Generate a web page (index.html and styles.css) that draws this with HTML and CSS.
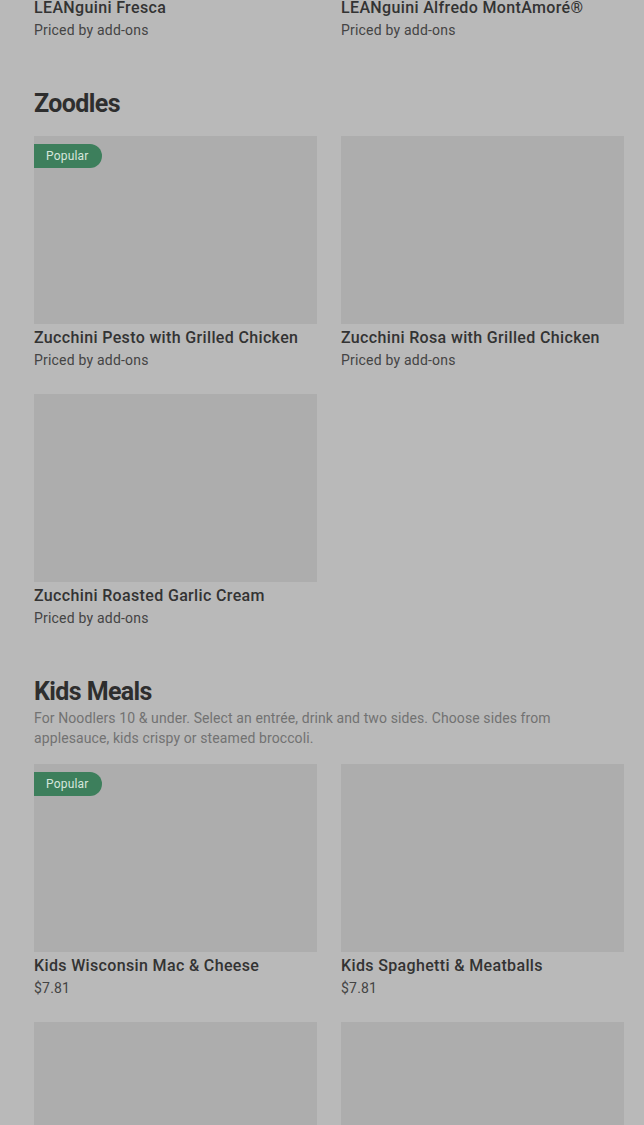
FILE: index.html
```html
<!DOCTYPE html>
<html lang="en">
<head>
    <meta charset="UTF-8">
    <meta name="viewport" content="width=device-width, initial-scale=1.0">
    <title>Menu</title>
    <link rel="stylesheet" href="styles.css">
</head>
<body>
    <div class="menu">
        <!-- tail of the previous section, scrolled past -->
        <section class="section section-tail">
            <div class="grid">
                <div class="item">
                    <div class="item-name">LEANguini Fresca</div>
                    <div class="item-price">Priced by add-ons</div>
                </div>
                <div class="item">
                    <div class="item-name">LEANguini Alfredo MontAmoré®</div>
                    <div class="item-price">Priced by add-ons</div>
                </div>
            </div>
        </section>

        <section class="section">
            <h2 class="section-title">Zoodles</h2>
            <div class="grid">
                <div class="item">
                    <div class="item-photo"><span class="badge">Popular</span></div>
                    <div class="item-name">Zucchini Pesto with Grilled Chicken</div>
                    <div class="item-price">Priced by add-ons</div>
                </div>
                <div class="item">
                    <div class="item-photo"></div>
                    <div class="item-name">Zucchini Rosa with Grilled Chicken</div>
                    <div class="item-price">Priced by add-ons</div>
                </div>
                <div class="item">
                    <div class="item-photo"></div>
                    <div class="item-name">Zucchini Roasted Garlic Cream</div>
                    <div class="item-price">Priced by add-ons</div>
                </div>
            </div>
        </section>

        <section class="section">
            <h2 class="section-title">Kids Meals</h2>
            <p class="section-desc">For Noodlers 10 &amp; under. Select an entrée, drink and two sides. Choose sides from applesauce, kids crispy or steamed broccoli.</p>
            <div class="grid">
                <div class="item">
                    <div class="item-photo"><span class="badge">Popular</span></div>
                    <div class="item-name">Kids Wisconsin Mac &amp; Cheese</div>
                    <div class="item-price">$7.81</div>
                </div>
                <div class="item">
                    <div class="item-photo"></div>
                    <div class="item-name">Kids Spaghetti &amp; Meatballs</div>
                    <div class="item-price">$7.81</div>
                </div>
                <div class="item">
                    <div class="item-photo"></div>
                </div>
                <div class="item">
                    <div class="item-photo"></div>
                </div>
            </div>
        </section>
    </div>
</body>
</html>
```

FILE: styles.css
```css
body {
    font-family: Roboto, "Liberation Sans", sans-serif;
    margin: 0;
    padding: 0;
    background-color: #b9b9b9;
    color: #333;
    overflow: hidden;
}

.menu {
    padding: 0 20px 0 34px;
}

.section {
    margin-bottom: 48px;
}

.section-tail {
    margin-top: -6px;
}

.section-title {
    margin: 0;
    padding-top: 2px;
    font-size: 25px;
    line-height: 28px;
    font-weight: 700;
    letter-spacing: -0.6px;
    color: #2e2e2e;
}

.section-desc {
    margin: 2px 0 0;
    font-size: 14px;
    line-height: 20px;
    letter-spacing: 0.1px;
    color: #727272;
    max-width: 540px;
}

.section-title + .grid {
    margin-top: 18px;
}

.section-desc + .grid {
    margin-top: 16px;
}

.grid {
    display: grid;
    grid-template-columns: repeat(2, 1fr);
    column-gap: 24px;
    row-gap: 24px;
}

.item-photo {
    position: relative;
    height: 188px;
    background-color: #adadad;
}

.badge {
    position: absolute;
    top: 8px;
    left: 0;
    height: 24px;
    padding: 0 13px 0 12px;
    line-height: 24px;
    font-size: 12px;
    letter-spacing: 0.2px;
    color: #d6e6dc;
    background-color: #3d7f5c;
    border-radius: 0 12px 12px 0;
}

.item-name {
    padding-top: 2px;
    font-size: 16px;
    line-height: 24px;
    font-weight: 500;
    letter-spacing: 0.35px;
    color: #333;
    white-space: nowrap;
}

.item-price {
    font-size: 14px;
    line-height: 20px;
    letter-spacing: 0.2px;
    color: #444;
}
```
